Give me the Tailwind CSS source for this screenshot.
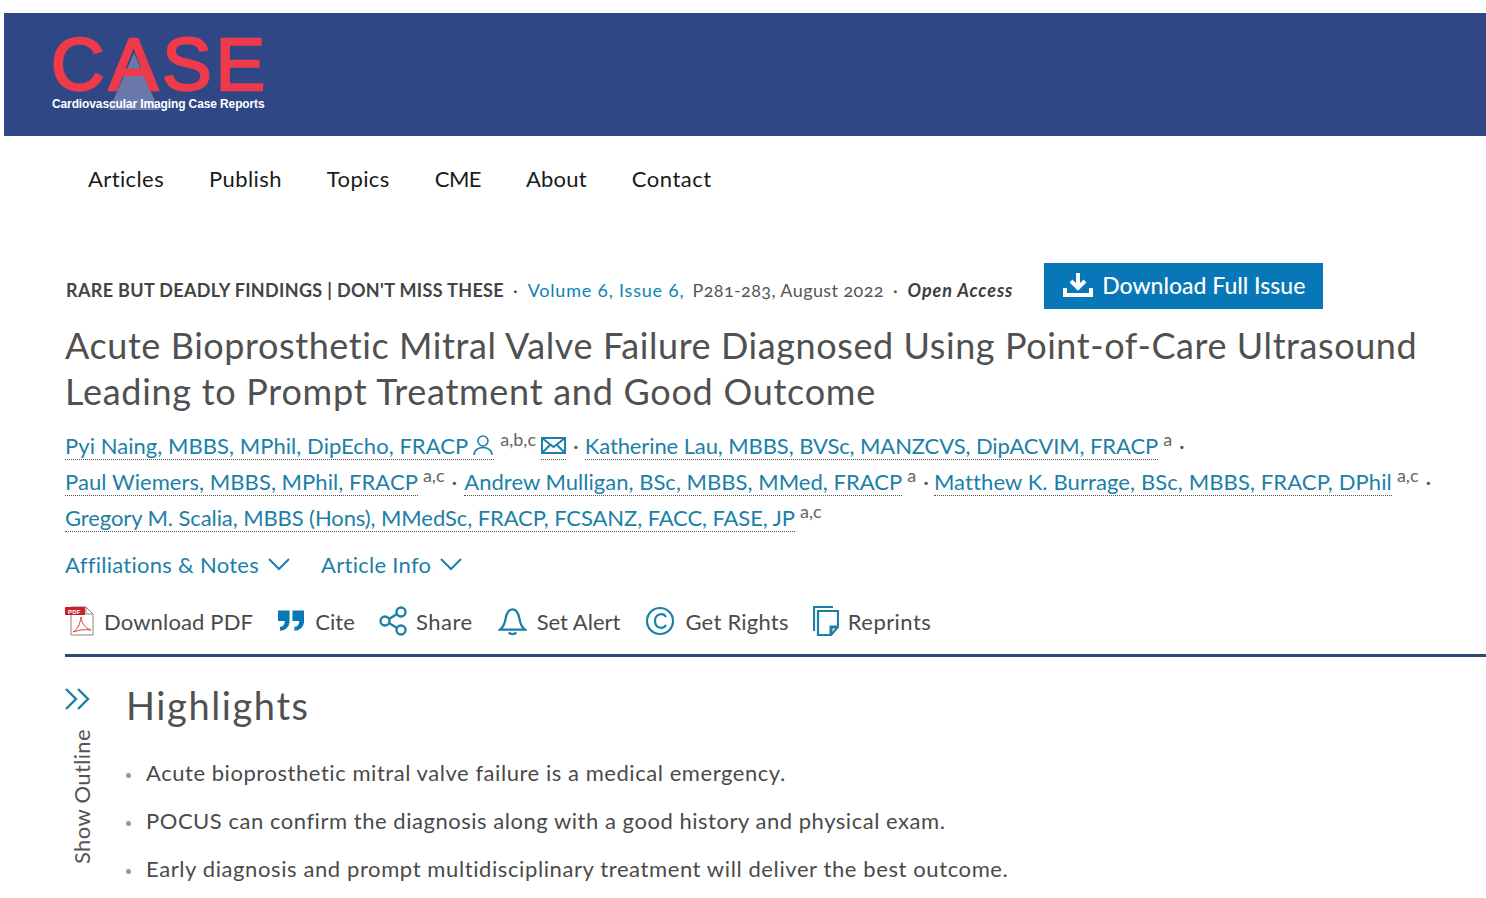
<!DOCTYPE html>
<html lang="en">
<head>
    <meta charset="UTF-8">
    <title>Acute Bioprosthetic Mitral Valve Failure | CASE</title>
    <script src="https://cdn.jsdelivr.net/npm/@tailwindcss/browser@4"></script>
</head>
<body class="bg-white h-[898px] overflow-hidden font-['Lato',sans-serif] text-[#3e3e3e]">
    <header class="mt-[13px] ml-[4px] h-[123px] bg-[#2f4885] pl-[47px] pt-[16px]">
        <div class="relative w-[216px] h-[90px]">
            <svg class="absolute left-[48px] top-[24px]" width="72" height="60" viewBox="0 0 72 60"><polygon points="35,0 10,57 60,57" fill="#6b79aa"/></svg>
            <div class="absolute left-0 top-[5px] font-['Liberation_Sans',sans-serif] text-[74px] leading-[62px] text-[#ee3a4a] tracking-[4.2px] [-webkit-text-stroke:2.4px_#ee3a4a]">CASE</div>
            <div class="absolute left-[1px] top-[68px] font-['Liberation_Sans',sans-serif] font-bold text-[12px] leading-[14px] tracking-[-0.12px] text-white whitespace-nowrap">Cardiovascular Imaging Case Reports</div>
        </div>
    </header>

    <nav class="flex gap-[45px] pl-[88px] h-[84px] items-center text-[22px] tracking-[0.4px] text-[#1a1a1a]">
        <a>Articles</a><a>Publish</a><a>Topics</a><a class="tracking-[-0.5px]">CME</a><a class="tracking-[0.2px]">About</a><a class="tracking-[0.5px]">Contact</a>
    </nav>

    <main class="pl-[65px]">
        <div class="flex items-center h-[46px] mt-[43px] ml-[1px] text-[18px] whitespace-nowrap">
            <div class="flex items-center mt-[8px]">
                <span class="font-bold text-[#444] tracking-[0.33px]">RARE BUT DEADLY FINDINGS | DON'T MISS THESE</span>
                <span class="ml-[9px] mr-[10px]">·</span>
                <span class="text-[#0d84b5] tracking-[0.8px]">Volume 6, Issue 6,</span>
                <span class="ml-[8px] text-[#555] oldstyle-nums tracking-[0.4px]">P281-283, August 2022</span>
                <span class="ml-[9px] mr-[10px]">·</span>
                <span class="italic font-bold tracking-[0.9px]">Open Access</span>
            </div>
            <a class="ml-[31px] w-[279px] h-[46px] pb-[2px] bg-[#0877b8] text-white text-[23px] font-medium flex items-center justify-center gap-[8px]">
                <svg width="32" height="28" viewBox="0 0 32 28" fill="none" stroke="white" stroke-width="4"><path d="M16 2v14M9 10l7 7 7-7"/><path d="M3 17v7h26v-7"/></svg>
                Download Full Issue
            </a>
        </div>

        <h1 class="mt-[13px] text-[36px] leading-[46px] text-[#505050]"><span class="tracking-[0.58px]">Acute Bioprosthetic Mitral Valve Failure Diagnosed Using Point-of-Care Ultrasound</span><br><span class="tracking-[0.73px]">Leading to Prompt Treatment and Good Outcome</span></h1>

        <div class="mt-[14px] text-[22px] leading-[36px] text-[#1c7fa8] whitespace-nowrap">
            <div class="flex items-center h-[36px]">
                <a class="border-b border-dotted border-[#555] leading-[27px] flex items-center tracking-[0.05px]">Pyi Naing, MBBS, MPhil, DipEcho, FRACP
                    <svg class="ml-[4px]" width="22" height="24" viewBox="0 0 22 24" fill="none" stroke="#1c7fa8" stroke-width="1.6"><circle cx="11" cy="7" r="5"/><path d="M2 21c0-10 18-10 18 0"/></svg>
                </a>
                <sup class="ml-[6px] mb-[14px] text-[18px] leading-[20px] text-[#666] top-0">a,b,c</sup>
                <a class="ml-[5px] border-b border-dotted border-[#555] h-[27px] flex items-center"><svg width="25" height="18" viewBox="0 0 25 18" fill="none" stroke="#1c7fa8" stroke-width="2"><rect x="1" y="1" width="23" height="15"/><path d="M1 1l11.500 9 11.500-9M1 16l8-8M24 16l-8-8"/></svg></a>
                <span class="ml-[7px] mr-[6px] text-[#555]">·</span>
                <a class="border-b border-dotted border-[#555] leading-[27px] tracking-[-0.1px]">Katherine Lau, MBBS, BVSc, MANZCVS, DipACVIM, FRACP</a>
                <sup class="ml-[5px] mb-[14px] text-[18px] leading-[20px] text-[#666] top-0">a</sup>
                <span class="ml-[7px] text-[#555]">·</span>
            </div>
            <div class="flex items-center h-[36px]">
                <a class="border-b border-dotted border-[#555] leading-[27px] tracking-[0.06px]">Paul Wiemers, MBBS, MPhil, FRACP</a>
                <sup class="ml-[5px] mb-[14px] text-[18px] leading-[20px] text-[#666] top-0">a,c</sup>
                <span class="mx-[7px] text-[#555]">·</span>
                <a class="border-b border-dotted border-[#555] leading-[27px] tracking-[0.03px]">Andrew Mulligan, BSc, MBBS, MMed, FRACP</a>
                <sup class="ml-[5px] mb-[14px] text-[18px] leading-[20px] text-[#666] top-0">a</sup>
                <span class="ml-[7px] mr-[5px] text-[#555]">·</span>
                <a class="border-b border-dotted border-[#555] leading-[27px] tracking-[0.11px]">Matthew K. Burrage, BSc, MBBS, FRACP, DPhil</a>
                <sup class="ml-[5px] mb-[14px] text-[18px] leading-[20px] text-[#666] top-0">a,c</sup>
                <span class="ml-[7px] text-[#555]">·</span>
            </div>
            <div class="flex items-center h-[36px]">
                <a class="border-b border-dotted border-[#555] leading-[27px] tracking-[-0.09px]">Gregory M. Scalia, MBBS (Hons), MMedSc, FRACP, FCSANZ, FACC, FASE, JP</a>
                <sup class="ml-[5px] mb-[14px] text-[18px] leading-[20px] text-[#666] top-0">a,c</sup>
            </div>
        </div>

        <div class="flex gap-[30px] mt-[10px] h-[36px] items-center text-[22px] tracking-[0.28px] text-[#1c7fa8]">
            <a class="flex items-center gap-[8px]">Affiliations &amp; Notes <svg width="24" height="14" viewBox="0 0 24 14" fill="none" stroke="#1c7fa8" stroke-width="2"><path d="M2 2l10 10 10-10"/></svg></a>
            <a class="flex items-center gap-[8px]">Article Info <svg width="24" height="14" viewBox="0 0 24 14" fill="none" stroke="#1c7fa8" stroke-width="2"><path d="M2 2l10 10 10-10"/></svg></a>
        </div>

        <div class="flex items-center mt-[19px] h-[40px] gap-[25px] text-[22px] text-[#4a4a4a]">
            <a class="flex items-center gap-[9px] tracking-[0.15px]">
                <svg width="30" height="30" viewBox="0 0 30 30" fill="none"><path d="M6 1h15l7 7v21H6z" fill="#fff" stroke="#888"/><path d="M21 1v7h7" stroke="#888"/><rect x="0" y="1" width="20" height="8" fill="#c8202c"/><text x="3" y="7.500" font-size="6" font-weight="bold" fill="#fff" font-family="Liberation Sans">PDF</text><path d="M8 26c5-3 7-8 8-15 1 7 4 11 10 13-6-1-12 0-18 2z" fill="none" stroke="#d0453f"/></svg>
                Download PDF
            </a>
            <a class="flex items-center gap-[10px] tracking-[0.1px]">
                <svg width="27" height="24" viewBox="0 0 28 24" fill="#0877b8"><path d="M0 1h12v11c0 6-4 10-10 10v-4c3 0 5-2 5-6H0z"/><path d="M15 1h12v11c0 6-4 10-10 10v-4c3 0 5-2 5-6h-7z"/></svg>
                Cite
            </a>
            <a class="flex items-center gap-[9px] tracking-[0.5px] -ml-[1px]">
                <svg width="28" height="30" viewBox="0 0 28 30" fill="none" stroke="#1c7fa8" stroke-width="2.400"><circle cx="6" cy="15" r="4.500"/><circle cx="22" cy="6" r="4.500"/><circle cx="22" cy="24" r="4.500"/><path d="M10 13l8-5M10 17l8 5"/></svg>
                Share
            </a>
            <a class="flex items-center gap-[10px]">
                <svg width="29" height="30" viewBox="0 0 30 30" fill="none" stroke="#1c7fa8" stroke-width="2.400"><path d="M2 24c4-3 5-6 6-12 1-5 3-9 7-9s6 4 7 9c1 6 2 9 6 12z"/><path d="M11 27c2 2 6 2 8 0"/></svg>
                Set Alert
            </a>
            <a class="flex items-center gap-[10px] tracking-[0.25px]">
                <svg width="30" height="30" viewBox="0 0 30 30" fill="none" stroke="#1c7fa8" stroke-width="2.200"><circle cx="15" cy="15" r="13"/><path d="M21 11c-3-5-11-3-11 4s8 9 11 4"/></svg>
                Get Rights
            </a>
            <a class="flex items-center gap-[9px] tracking-[0.45px] -ml-[1px]">
                <svg width="26" height="30" viewBox="0 0 26 30" fill="none" stroke="#1c7fa8" stroke-width="2.200"><path d="M1 25V1h19"/><path d="M5 5h20v16l-7 8H5z"/><path d="M18 28v-7h7" stroke-width="3"/></svg>
                Reprints
            </a>
        </div>

        <div class="h-[3px] bg-[#2f4a70] mt-[13px]"></div>

        <div class="flex mt-[25px]">
            <div class="w-[61px] pt-[5px] flex flex-col">
                <svg width="26" height="24" viewBox="0 0 26 24" fill="none" stroke="#1c7fa8" stroke-width="2.400"><path d="M1 2l10 10L1 22M13 2l10 10-10 10"/></svg>
                <span class="mt-[17px] ml-[5px] [writing-mode:vertical-rl] rotate-180 text-[22px] leading-[24px] tracking-[0.35px] text-[#555] h-[136px]">Show Outline</span>
            </div>
            <div>
                <h2 class="text-[38px] leading-[46px] text-[#505050] tracking-[1.6px]">Highlights</h2>
                <ul class="mt-[31px] text-[22px] leading-[28px] text-[#4a4a4a] flex flex-col gap-[20px]">
                    <li class="flex items-center tracking-[0.55px]"><span class="w-[5px] h-[5px] rounded-full bg-[#999] mr-[15px] mt-[4px]"></span>Acute bioprosthetic mitral valve failure is a medical emergency.</li>
                    <li class="flex items-center tracking-[0.53px]"><span class="w-[5px] h-[5px] rounded-full bg-[#999] mr-[15px] mt-[4px]"></span>POCUS can confirm the diagnosis along with a good history and physical exam.</li>
                    <li class="flex items-center tracking-[0.6px]"><span class="w-[5px] h-[5px] rounded-full bg-[#999] mr-[15px] mt-[4px]"></span>Early diagnosis and prompt multidisciplinary treatment will deliver the best outcome.</li>
                </ul>
            </div>
        </div>
    </main>
</body>
</html>
